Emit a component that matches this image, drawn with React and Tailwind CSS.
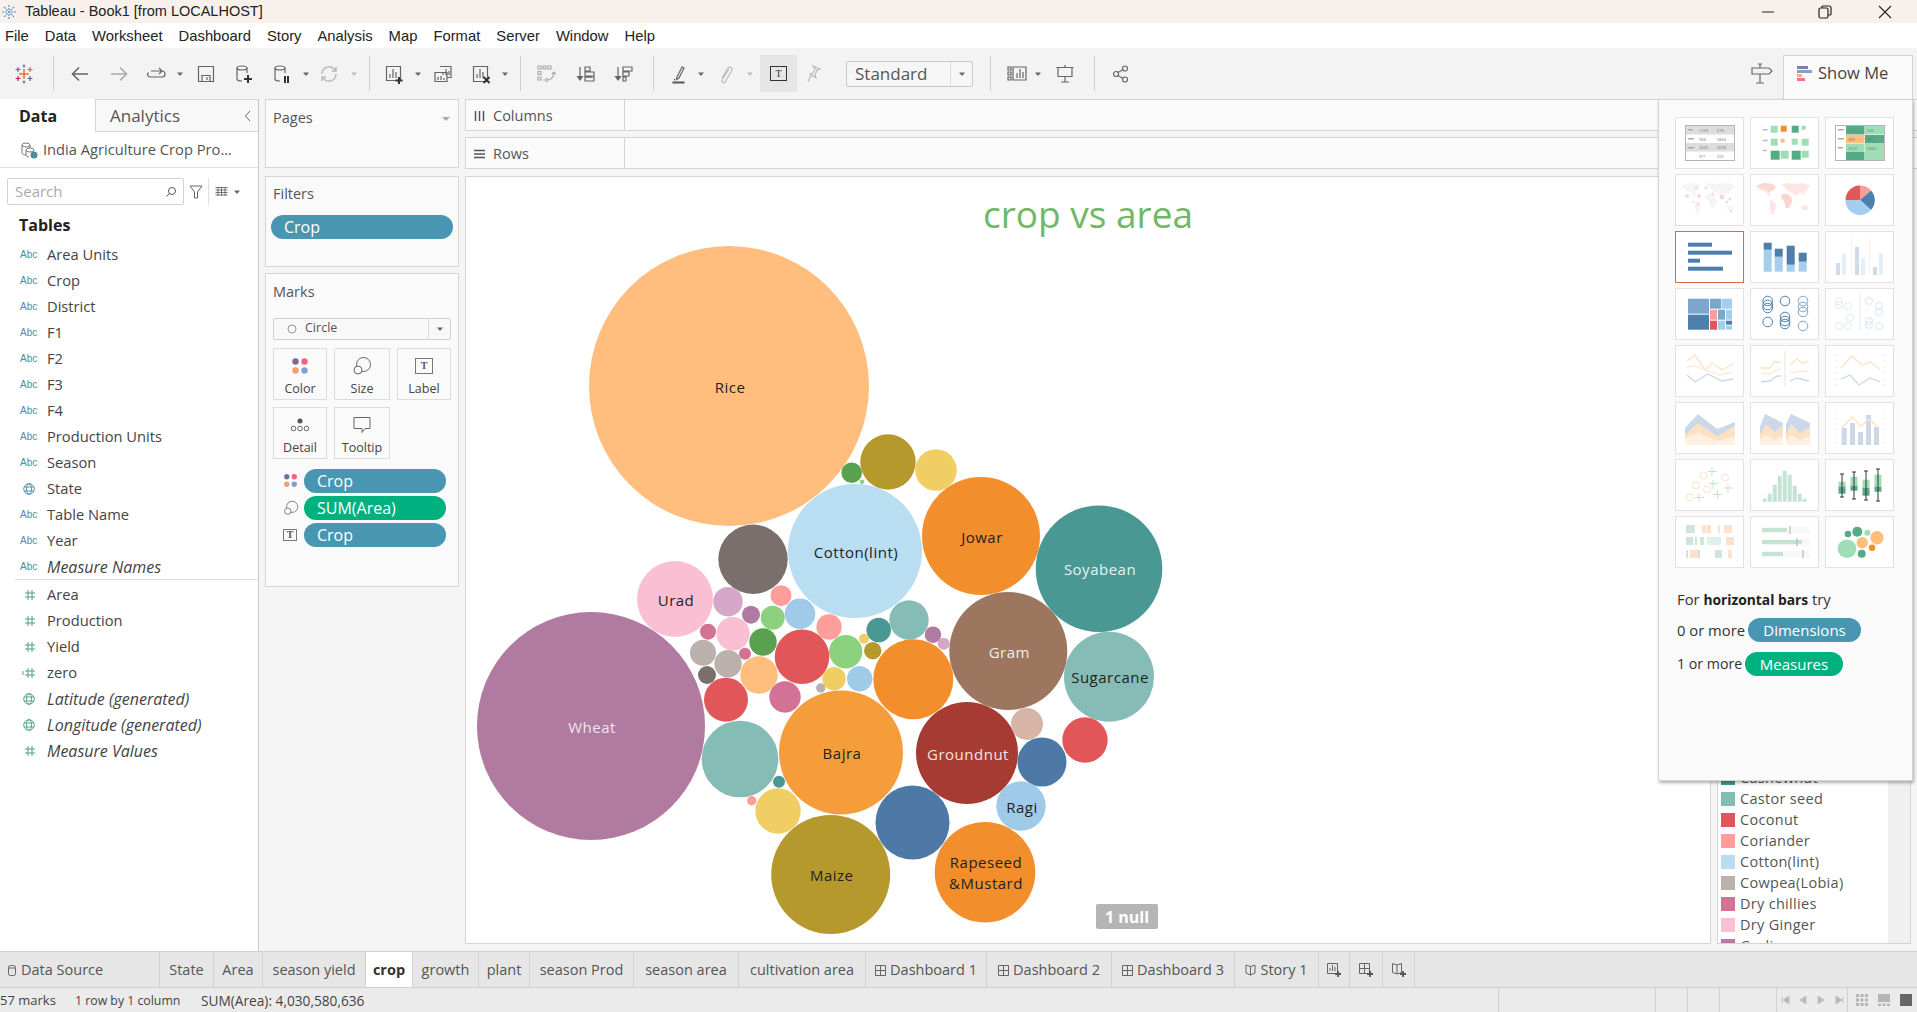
import React from "react";

const FONT = "font-['Open_Sans','Noto_Sans',sans-serif]";

const I = ({ w = 20, h = 20, vb, className = "", children, sw = 1.2, stroke = "#666" }) => (
  <svg width={w} height={h} viewBox={vb || `0 0 ${w} ${h}`} fill="none" stroke={stroke} strokeWidth={sw} className={"shrink-0 " + className}>{children}</svg>
);
const Dd = ({ className = "", light }) => (
  <svg width="8" height="20" viewBox="0 0 8 20" className={"shrink-0 " + className}><path d="M1 8.5h6L4 12z" fill={light ? "#bbb" : "#666"} /></svg>
);
const Div = ({ className = "" }) => <div className={"w-px h-[35px] bg-[#cfcfcf] shrink-0 " + className} />;

const Logo = () => (
  <svg width="20" height="20" viewBox="0 0 20 20" className="shrink-0" strokeWidth="1.2" fill="none">
    <path d="M10 5v10M5 10h10" stroke="#e8762b" strokeWidth="1.6" />
    <path d="M4 3v5M1.500 5.500h5" stroke="#7b5ea7" />
    <path d="M16 3v5M13.500 5.500h5" stroke="#e15759" />
    <path d="M4 12v5M1.500 14.500h5" stroke="#c72035" />
    <path d="M16 12v5M13.500 14.500h5" stroke="#5b6591" />
    <path d="M10 .5v3M8.500 2h3M10 16.500v3M8.500 18h3" stroke="#4e79a7" />
  </svg>
);
const Db = ({ children, color = "#666" }) => (
  <I stroke={color}><ellipse cx="8" cy="4" rx="5" ry="2" /><path d="M3 4v11c0 1 2 2 5 2M13 4v5" />{children}</I>
);
const Toolbar = () => (
  <div className="h-[51px] bg-[#f3f3f3] flex items-center pl-[14px] shrink-0 relative">
    <Logo />
    <Div className="ml-[19px]" />
    <I className="ml-[16px]" sw={1.6}><path d="M18 10H3M9 3.500L2.500 10 9 16.500" /></I>
    <I className="ml-[19px]" sw={1.6} stroke="#aaa"><path d="M2 10h15M11 3.500l6.500 6.500-6.500 6.500" /></I>
    <I className="ml-[17px]"><path d="M5 7h11a2.500 2.500 0 0 1 0 6H4a2.500 2.500 0 0 1-1.500-4.500M13 4l3 3-3 3" /></I>
    <Dd className="ml-[10px]" />
    <I className="ml-[12px]"><path d="M2.500 2.500h15v15h-15zM6 17.500v-6h8v6M11 13v3" /></I>
    <div className="ml-[18px]"><Db><path d="M14 11v8M10 15h8" stroke="#333" strokeWidth="2" /></Db></div>
    <div className="ml-[18px]"><Db><path d="M13 12v7M16 12v7" stroke="#333" strokeWidth="2" /></Db></div>
    <Dd className="ml-[10px]" />
    <I className="ml-[9px]" stroke="#bbb" sw={1.5}><path d="M3 10a7 7 0 0 1 12-5l2 2M17 10a7 7 0 0 1-12 5l-2-2M17 3v4h-4M3 17v-4h4" /></I>
    <Dd className="ml-[11px]" light />
    <Div className="ml-[11px]" />
    <I className="ml-[14px]"><path d="M2.500 2.500h14v14h-14zM6 14v-4M9 14V5M12 14V8" /><path d="M15 13v7M11.500 16.500h7" stroke="#333" strokeWidth="2" /></I>
    <Dd className="ml-[10px]" />
    <I className="ml-[11px]"><path d="M7 2.500h11v11h-4M10 11V8M13 11V5M16 11V7M2 8.500h12v9H2zM5 16v-3M8 16v-4M11 16v-2" /></I>
    <I className="ml-[18px]"><path d="M2.500 2.500h14v15h-14zM6 14v-4M9 14V5M12 14V8" /><path d="M12.500 13l6 6M18.500 13l-6 6" stroke="#333" strokeWidth="2" /></I>
    <Dd className="ml-[10px]" />
    <Div className="ml-[11px]" />
    <I className="ml-[15px]" stroke="#aaa"><path d="M2 2h3v3H2zM7 2h3v3H7zM12 2h3v3h-3zM2 7.500h3v3H2zM2 13h3v3H2zM7 16h3M18 8c0 5-2 7-6 8M10 14l2 2-2 2M16 10l2-2 2 2" /></I>
    <I className="ml-[20px]"><path d="M4 3v13M1.500 12.500L4 16l2.500-3.500z" fill="#555" /><path d="M9 3h5v4H9zM9 8h9v4H9zM9 13h7" /><path d="M9 13h9v4H9z" /></I>
    <I className="ml-[18px]"><path d="M4 3v13M1.500 12.500L4 16l2.500-3.500z" fill="#555" /><path d="M9 3h9v4H9zM9 8h6v4H9zM9 13h3v4H9z" /></I>
    <Div className="ml-[19px]" />
    <I className="ml-[16px]"><path d="M7 13L12 3l2 1-5 10-2.500 1.500zM5 15l-1 1" /><path d="M2.500 18.500h12" stroke="#555" strokeWidth="2" /></I>
    <Dd className="ml-[7px]" />
    <I className="ml-[11px]" stroke="#bbb"><path d="M6 14l6-10c1-2 5 0 4 2l-7 12c-1 2-4 0-3-2l7-11" /></I>
    <Dd className="ml-[10px]" light />
    <div className="ml-[6px] w-[37px] h-[37px] bg-[#e6e6e6] flex items-center justify-center shrink-0">
      <div className={"w-[17px] h-[15px] border border-[#333] flex items-center justify-center text-[10px] leading-none text-[#333] font-['Liberation_Serif',serif]"}>T</div>
    </div>
    <I className="ml-[7px]" stroke="#bbb"><path d="M9 2l7 3-3 1-2 5 1 3-6-4 3-1 2-4zM7 11l-3 7" /></I>
    <div className={`ml-[22px] w-[127px] h-[26px] rounded-[2px] border border-[#c8c8c8] bg-[#f6f6f6] flex items-center shrink-0 ${FONT}`}>
      <span className="flex-1 pl-[8px] text-[17px] text-[#555] leading-none">Standard</span>
      <div className="w-[22px] h-full border-l border-[#dcdcdc] flex items-center justify-center"><Dd /></div>
    </div>
    <Div className="ml-[17px]" />
    <I className="ml-[16px]"><path d="M1 3h3v3H1zM1 8h3v3H1zM1 13h3v3H1zM6 3h13v13H6zM10 14V9M13 14V5M16 14V8" /></I>
    <Dd className="ml-[7px]" />
    <I className="ml-[13px]"><path d="M1.500 3.500h17M3 3.500v9h14v-9M10 12.500v5M6 18h8M10 1v2.500" /></I>
    <Div className="ml-[19px]" />
    <I className="ml-[16px]"><circle cx="5" cy="10" r="2.500" /><circle cx="14" cy="4.500" r="2.500" /><circle cx="14" cy="15.500" r="2.500" /><path d="M7 8.500l5-3M7 11.500l5 3" /></I>
    <div className="ml-auto flex items-end h-full">
      <I w={24} h={24} className="mb-[14px] mr-[9px]"><path d="M2 7h17l3 3-3 3H2zM10 7V3M10 13v9M6 22h8M8 3h4" /></I>
      <div className={`w-[130px] h-[44px] bg-[#fafafa] border-t border-x border-[#d4d4d4] flex items-center pl-[13px] pb-[8px] mr-[4px] gap-[6px] text-[#444] text-[16.500px] ${FONT}`}>
        <svg width="15" height="16" viewBox="0 0 15 16" className="shrink-0"><path fill="#8d7aa3" d="M0 0h11v3H0z" /><path fill="#7ba3cc" d="M0 4h15v3H0z" /><path fill="#f7b27a" d="M0 8h5v3H0z" /><path fill="#f2737f" d="M0 12h8v3H0z" /></svg>
        Show Me
      </div>
    </div>
  </div>
);

const Abc = ({ color = "#4e8ba5" }) => <span className="w-[32px] text-center pl-[5px] pr-[11px] text-[10px] leading-none font-['Liberation_Sans',sans-serif] shrink-0" style={{ color }}>Abc</span>;
const Hash = ({ eq }) => (
  <span className="w-[32px] flex justify-center shrink-0 pl-[4px] pr-[8px]">
    <svg width="14" height="12" viewBox="0 0 14 12" stroke="#4aa37c" strokeWidth="1" fill="none"><path d="M6 1v10M10 1v10M3 4h10M3 8h10" />{eq && <path d="M0 5h2M0 7h2" />}</svg>
  </span>
);
const Globe = ({ color = "#4e8ba5" }) => (
  <span className="w-[32px] flex justify-center shrink-0 pl-[4px] pr-[8px]">
    <svg width="12" height="12" viewBox="0 0 12 12" stroke={color} strokeWidth=".9" fill="none"><circle cx="6" cy="6" r="5.300" /><ellipse cx="6" cy="6" rx="2.500" ry="5.300" /><path d="M1 4h10M1 8h10" /></svg>
  </span>
);
const dims = [
  ["Area Units"], ["Crop"], ["District"], ["F1"], ["F2"], ["F3"], ["F4"], ["Production Units"], ["Season"],
  ["State", "globe"], ["Table Name"], ["Year"], ["Measure Names", "abc", true],
];
const meas = [
  ["Area", "hash"], ["Production", "hash"], ["Yield", "hash"], ["zero", "eq"],
  ["Latitude (generated)", "globeg", true], ["Longitude (generated)", "globeg", true], ["Measure Values", "hash", true],
];
const Field = ({ name, kind = "abc", it }) => (
  <div className="h-[26px] flex items-center pl-[15px] pb-[1px]">
    {kind === "abc" && <Abc />}
    {kind === "globe" && <Globe />}
    {kind === "globeg" && <Globe color="#4aa37c" />}
    {kind === "hash" && <Hash />}
    {kind === "eq" && <Hash eq />}
    <span className={"text-[#444] whitespace-nowrap " + (it ? "italic text-[16px]" : "text-[14.700px]")}>{name}</span>
  </div>
);

const LeftPane = () => (
  <div className={`w-[259px] shrink-0 bg-white border-r border-[#c8c8c8] flex flex-col ${FONT}`}>
    <div className="h-[33px] flex shrink-0">
      <div className="w-[95px] flex items-center pl-[19px] text-[16px] font-bold text-[#222]">Data</div>
      <div className="flex-1 bg-[#f8f8f8] border-l border-b border-t border-[#d6d6d6] flex items-center pl-[14px] text-[17px] text-[#555] relative">
        Analytics
        <svg width="8" height="12" viewBox="0 0 8 12" className="ml-auto mr-[6px]" fill="none" stroke="#666"><path d="M6 1L1.500 6 6 11" /></svg>
      </div>
    </div>
    <div className="h-[36px] border-b border-[#dedede] flex items-center pl-[20px] shrink-0">
      <svg width="18" height="18" viewBox="0 0 18 18" fill="none" stroke="#777" className="shrink-0"><ellipse cx="6" cy="4" rx="4" ry="2" /><path d="M2 4v8c0 1 2 2 4 2M10 4v3" /><ellipse cx="10" cy="9" rx="4" ry="2" /><path d="M6 9v5c0 1 2 2 3 2" /><circle cx="14" cy="14" r="3.500" fill="#4e8ba5" stroke="none" /></svg>
      <span className="ml-[5px] text-[14.700px] text-[#555] whitespace-nowrap">India Agriculture Crop Pro...</span>
    </div>
    <div className="h-[27px] mt-[10px] flex items-center pl-[7px] shrink-0">
      <div className="w-[177px] h-full border border-[#d2d2d2] rounded-[2px] flex items-center pl-[7px] pr-[6px] text-[15px] text-[#aaa]">
        <span className="flex-1">Search</span>
        <svg width="12" height="12" viewBox="0 0 12 12" fill="none" stroke="#555"><circle cx="7" cy="5" r="3.500" /><path d="M4.500 7.500L1.500 10.500" /></svg>
      </div>
      <svg width="14" height="14" viewBox="0 0 14 14" fill="none" stroke="#666" className="ml-[5px]"><path d="M1 1h12L8.500 7v6h-3V7z" /></svg>
      <div className="w-px h-[27px] bg-[#e0e0e0] ml-[5px]" />
      <svg width="13" height="12" viewBox="0 0 13 12" fill="none" stroke="#666" strokeWidth=".9" className="ml-[6px]"><path d="M.500 1.500h12M.500 4h12M.500 6.500h12M.500 9h12M3 1v9M6.500 1v9M10 1v9" /></svg>
      <Dd className="ml-[5px]" />
    </div>
    <div className="h-[26px] mt-[7px] flex items-center pl-[19px] text-[16px] font-bold text-[#222] shrink-0">Tables</div>
    <div className="mt-[4px] pb-0">
      {dims.map(([n, k, it]) => <Field key={n} name={n} kind={k} it={it} />)}
    </div>
    <div className="ml-[15px] h-px bg-[#dedede] -mt-[1px]" />
    <div className="mt-[2px]">
      {meas.map(([n, k, it]) => <Field key={n} name={n} kind={k} it={it} />)}
    </div>
  </div>
);

const Pill = ({ children, green, className = "" }) => (
  <div className={`rounded-full h-[24px] flex items-center pl-[13px] text-[16px] text-white leading-none ${green ? "bg-[#00b180]" : "bg-[#4996b2]"} ${className}`}>{children}</div>
);
const Dots = ({ s = 18 }) => (
  <svg width={s} height={s} viewBox="0 0 18 18"><circle cx="4.500" cy="4.500" r="3.200" fill="#7b6a96" /><circle cx="13.500" cy="4.500" r="3.200" fill="#f2637a" /><circle cx="4.500" cy="13.500" r="3.200" fill="#f2a06e" /><circle cx="13.500" cy="13.500" r="3.200" fill="#7ba3d0" /></svg>
);
const SizeI = ({ s = 20 }) => (
  <svg width={s} height={s} viewBox="0 0 20 20" fill="none" stroke="#666"><circle cx="11.500" cy="8.500" r="7" fill="#fafafa" /><circle cx="6" cy="14" r="4" fill="#fafafa" /></svg>
);
const TI = ({ w = 18, h = 16 }) => (
  <div className="border border-[#777] flex items-center justify-center text-[10px] leading-none text-[#555] font-['Liberation_Serif',serif] font-bold" style={{ width: w, height: h }}>T</div>
);
const MarkBtn = ({ label, w, children }) => (
  <div className={`${w} h-[52px] border border-[#dcdcdc] flex flex-col items-center pt-[6px] shrink-0`}>
    <div className="h-[22px] flex items-center justify-center">{children}</div>
    <div className="text-[12.500px] text-[#444] leading-none mt-[6px]">{label}</div>
  </div>
);
const Card = ({ title, className = "", pt = "pt-[11px]", children }) => (
  <div className={`bg-[#fafafa] border border-[#d4d4d4] shrink-0 ${className}`}>
    <div className={`pl-[7px] ${pt} text-[14.500px] text-[#555] leading-none`}>{title}</div>
    {children}
  </div>
);
const MiddlePane = () => (
  <div className={`w-[194px] ml-[6px] shrink-0 flex flex-col ${FONT}`}>
    <Card title="Pages" className="h-[69px] relative">
      <svg width="8" height="5" viewBox="0 0 8 5" className="absolute right-[8px] top-[17px]"><path d="M0 0h8L4 4z" fill="#aaa" /></svg>
    </Card>
    <Card title="Filters" pt="pt-[10px]" className="h-[91px] mt-[8px]">
      <div className="px-[5px] mt-[13px]"><Pill>Crop</Pill></div>
    </Card>
    <Card title="Marks" className="h-[314px] mt-[6px]">
      <div className="mx-[7px] mt-[18px] h-[22px] border border-[#cfcfcf] rounded-[2px] flex items-center text-[12.500px] text-[#555] bg-[#f8f8f8]">
        <svg width="10" height="10" viewBox="0 0 10 10" fill="none" stroke="#999" className="ml-[13px]"><circle cx="5" cy="5" r="4" /></svg>
        <span className="ml-[8px] flex-1">Circle</span>
        <div className="w-[22px] h-full border-l border-[#dcdcdc] flex items-center justify-center"><Dd /></div>
      </div>
      <div className="flex gap-[7px] ml-[7px] mt-[8px]">
        <MarkBtn label="Color" w="w-[54px]"><Dots /></MarkBtn>
        <MarkBtn label="Size" w="w-[56px]"><SizeI /></MarkBtn>
        <MarkBtn label="Label" w="w-[54px]"><TI /></MarkBtn>
      </div>
      <div className="flex gap-[7px] ml-[7px] mt-[7px]">
        <MarkBtn label="Detail" w="w-[54px]">
          <svg width="20" height="16" viewBox="0 0 20 16" fill="none" stroke="#666"><circle cx="10" cy="4" r="2.500" fill="#555" stroke="none" /><circle cx="3.500" cy="11.500" r="2.300" /><circle cx="10" cy="11.500" r="2.300" /><circle cx="16.500" cy="11.500" r="2.300" /></svg>
        </MarkBtn>
        <MarkBtn label="Tooltip" w="w-[56px]">
          <svg width="20" height="18" viewBox="0 0 20 18" fill="none" stroke="#666"><path d="M2 1.500h16v11h-5L10 16.500V12.500H2z" /></svg>
        </MarkBtn>
      </div>
      <div className="mt-[10px] flex flex-col gap-[3px] pl-[17px]">
        <div className="flex items-center"><span className="w-[21px]"><Dots s={15} /></span><Pill className="w-[142px]">Crop</Pill></div>
        <div className="flex items-center"><span className="w-[21px]"><SizeI s={16} /></span><Pill green className="w-[142px]">SUM(Area)</Pill></div>
        <div className="flex items-center"><span className="w-[21px]"><TI w={14} h={12} /></span><Pill className="w-[142px]">Crop</Pill></div>
      </div>
    </Card>
  </div>
);

const bubbles = [
  [729, 386, 140, "#ffbe7d", "Rice", "#222"],
  [591, 726, 114, "#b07aa1", "Wheat", "#f1e6ee"],
  [855, 551, 67, "#b9ddf1", "Cotton(lint)", "#222"],
  [753, 559.300, 34.700, "#79706e"],
  [675, 599, 38, "#fabfd2", "Urad", "#222"],
  [728, 601.700, 14.700, "#d4a6c8"],
  [751, 614.700, 9, "#b07aa1"],
  [781, 595.700, 10.500, "#ff9d9a"],
  [772.700, 617.700, 12, "#8cd17d"],
  [800, 613.700, 15.300, "#a0cbe8"],
  [829, 627, 12.700, "#ff9d9a"],
  [878.700, 630, 12.300, "#499894"],
  [909, 620, 19.700, "#86bcb6"],
  [933, 634.700, 8.300, "#b07aa1"],
  [943.700, 643.700, 6, "#d4a6c8"],
  [708, 631.700, 8, "#d37295"],
  [733, 633.700, 16.700, "#fabfd2"],
  [703, 652.700, 13, "#bab0ac"],
  [763, 642, 13.700, "#59a14f"],
  [745, 653.700, 6, "#d37295"],
  [728, 663.700, 13.700, "#bab0ac"],
  [707, 675, 9, "#79706e"],
  [802, 656.700, 27.300, "#e15759"],
  [845.700, 651.700, 16.700, "#8cd17d"],
  [864, 638.700, 5, "#f1ce63"],
  [872.700, 650.700, 8.700, "#b6992d"],
  [759, 675, 18.700, "#ffbe7d"],
  [834, 678.700, 11.700, "#f1ce63"],
  [859.700, 678.700, 12.700, "#a0cbe8"],
  [820.700, 688, 4.700, "#bab0ac"],
  [785, 697, 15.700, "#d37295"],
  [726, 699.700, 22, "#e15759"],
  [740, 759, 38.300, "#86bcb6"],
  [913.300, 679.300, 40, "#f28e2b"],
  [841, 752.500, 62, "#f59d3b", "Bajra", "#222"],
  [967, 753, 51, "#a53b33", "Groundnut", "#f3e3e0"],
  [1008.300, 651, 59, "#9d7660", "Gram", "#f3ebe6"],
  [981, 536, 59, "#f28e2b", "Jowar", "#222"],
  [1099, 568.700, 63.300, "#499894", "Soyabean", "#e6f2f1"],
  [1109, 676.700, 45, "#86bcb6", "Sugarcane", "#222"],
  [888, 462, 27.700, "#b6992d"],
  [851.700, 472.700, 10.300, "#59a14f"],
  [862, 481.700, 2.300, "#8cd17d"],
  [936, 470, 20.800, "#f1ce63"],
  [1085, 740, 22.700, "#e15759"],
  [1027, 724, 16, "#d7b5a6"],
  [1042, 762, 24.500, "#4e79a7"],
  [1021, 806, 24.700, "#a0cbe8", "Ragi", "#222"],
  [912.500, 822.500, 37, "#4e79a7"],
  [830.700, 874.500, 59.500, "#b6992d", "Maize", "#222"],
  [985, 872.300, 50.300, "#f28e2b"],
  [778, 811, 22.700, "#f1ce63"],
  [779, 781.700, 6, "#499894"],
  [751.700, 800.700, 4.700, "#ff9d9a"],
];
const View = () => (
  <div className={`flex-1 bg-white border border-[#d4d4d4] relative overflow-hidden ${FONT}`}>
    <div className="text-center pt-[15px] text-[37px] leading-[44px] text-[#6fb966]">crop vs area</div>
    <svg width="1246" height="768" viewBox="465 176 1246 768" className="absolute left-[-1px] top-[-1px]">
      {bubbles.map(([x, y, r, f], i) => <circle key={i} cx={x} cy={y} r={r} fill={f} />)}
      {bubbles.filter(b => b[4]).map(([x, y, r, f, t, c]) => (
        <text key={t} x={x + 1} y={y + 6.500} fill={c} fontSize="15" textAnchor="middle" letterSpacing=".5">{t}</text>
      ))}
      <text x="986" y="868" fill="#222" fontSize="15" textAnchor="middle" letterSpacing=".5">Rapeseed</text>
      <text x="986" y="889" fill="#222" fontSize="15" textAnchor="middle" letterSpacing=".5">&amp;Mustard</text>
    </svg>
    <div className="absolute left-[630px] top-[727px] w-[62px] h-[25px] rounded-[2px] bg-[#b5b5b5] text-white font-bold text-[16px] flex items-center justify-center">1 null</div>
  </div>
);

const legend = [
  ["Cashewnut", "#499894"], ["Castor seed", "#86bcb6"], ["Coconut", "#e15759"], ["Coriander", "#ff9d9a"],
  ["Cotton(lint)", "#b9ddf1"], ["Cowpea(Lobia)", "#bab0ac"], ["Dry chillies", "#d37295"], ["Dry Ginger", "#fabfd2"], ["Garlic", "#b07aa1"],
];
const Legend = () => (
  <div className={`w-[194px] ml-[6px] mr-[6px] shrink-0 bg-[#f0f0f0] border border-[#d4d4d4] flex overflow-hidden ${FONT}`}>
    <div className="w-[170px] bg-white flex flex-col justify-end pl-[3px] overflow-hidden">
      <div className="-mb-[13px]">
        {legend.map(([n, c]) => (
          <div key={n} className="h-[21px] flex items-center text-[14.500px] tracking-[0.3px] text-[#555] whitespace-nowrap">
            <span className="w-[14px] h-[14px] mr-[5px] shrink-0 block" style={{ background: c }} />{n}
          </div>
        ))}
      </div>
    </div>
  </div>
);

/* Show Me thumbnails */
const P = "#c9d9e8", O = "#fde1c4", OL = "#fef1e2", G = "#c5e3d3", DB = "#4e7fac", LB = "#a5cdee", LG = "#9fddb5", DG = "#55ab85";
const rs = (arr, fill) => arr.map(([x, y, w, h], i) => <rect key={fill + i} x={x} y={y} width={w} height={h} fill={fill} />);
const pl = (pts, stroke, sw = 1.300) => <polyline points={pts} fill="none" stroke={stroke} strokeWidth={sw} />;
const tt = (x, y, s) => <text x={x} y={y} fontSize="4" fill="#777" stroke="none">{s}</text>;
const land = "M6 12l8-3 9 1 3 3-4 4-3 1 2 3-2 2-3-5-6-2zM20 26l5 2 1 5-3 8-2-1-1-7zM31 10l8-1 3 1 12-1 6 3-3 4-3 1 1 4-3-2-5 1-1 3-3-4-4-1zM32 20l6 0 3 3 1 4-3 7-3 0-2-7-3-3zM51 32l5-1 3 3-3 2-4 0z";
const thumbs = [
  <g key="0">
    <rect x="10.500" y="8.500" width="49" height="35" fill="#fff" stroke="#b5b5b5" />
    {rs([[11, 9, 48, 8.500], [11, 26, 48, 8.500]], "#ddd")}
    {rs([[13, 12, 5, 1.500], [13, 21, 6, 1.500], [13, 30, 6, 1.500]], "#aaa")}
    {tt(24, 14.500, "1234")}{tt(42, 14.500, "678")}{tt(24, 23.500, "368")}{tt(42, 23.500, "3834")}{tt(24, 32, "2620")}{tt(42, 32, "2658")}{tt(24, 41, "971")}{tt(42, 41, "322")}
  </g>,
  <g key="1">
    {rs([[12.700, 12, 5, 1.500], [12.700, 22.700, 5, 1.500], [12.700, 32.700, 4, 1.500]], "#bbb")}
    {rs([[20.700, 8.700, 7, 7], [51.700, 8.700, 4, 4], [20.700, 21.700, 7, 7], [41.700, 21.700, 6, 6], [51.700, 21.700, 7, 7], [30.700, 33.700, 8, 8], [51.700, 33.700, 7, 7]], LG)}
    {rs([[41.700, 8.700, 7, 7], [20.700, 33.700, 9, 9], [41.700, 33.700, 9, 9]], DG)}
    {rs([[30.700, 8.700, 6, 6]], "#f28e2b")}{rs([[30.700, 21.700, 4, 4]], "#ffbe7d")}
  </g>,
  <g key="2">
    <rect x="10.500" y="8.500" width="49" height="35" fill="#fff" stroke="#b5b5b5" />
    {rs([[21, 9, 18.500, 8.500], [40, 18, 19, 8.500], [21, 35, 18.500, 8]], DG)}
    {rs([[40, 9, 19, 8.500], [21, 27, 18.500, 8], [40, 27, 19, 8], [40, 35, 19, 8]], LG)}
    {rs([[21, 18, 18.500, 8.500]], "#ffbe7d")}
    {rs([[13, 12, 6, 1.500], [13, 21, 6, 1.500], [13, 30, 5, 1.500]], "#aaa")}
    {tt(23, 15, "1234")}{tt(42, 15, "546")}{tt(23, 24, "368")}{tt(42, 24, "380")}{tt(23, 33, "2620")}{tt(42, 33, "5860")}
  </g>,
  <g key="3">
    <path d={land} fill="#f5f5f5" />
    {[[12, 22, 2], [21, 14, 1.500], [24, 22, 2], [31, 14, 1.500], [38, 20, 1.500], [47, 23, 2.500], [52, 28, 1.500], [55, 25, 1.500], [23, 30, 1.500], [56, 37, 1.500], [18, 28, 1]].map(([x, y, r], i) => <circle key={i} cx={x} cy={y} r={r} fill="#f9d8d5" />)}
  </g>,
  <g key="4"><path d={land} fill="#fde6e3" /><path d="M6 12l8-3 9 1 3 3-4 4-3 1-3-2-6-2zM32 20l6 0 3 3 1 4-3 7-3 0-2-7-3-3z" fill="#f9d7d2" /></g>,
  <g key="5">
    <path d="M35 26L35 11.500A14.500 14.500 0 0 1 46 16.500z" fill="#ff9d9a" />
    <path d="M35 26L46 16.500A14.500 14.500 0 0 1 46 36z" fill="#4e7fac" />
    <path d="M35 26L46 36A14.500 14.500 0 0 1 20.500 26z" fill="#a5cdee" />
    <path d="M35 26L20.500 26A14.500 14.500 0 0 1 35 11.500z" fill="#e15759" />
  </g>,
  <g key="6">{rs([[13, 11.700, 24, 4], [13, 19.700, 44, 4], [13, 27.700, 12, 4], [13, 35.700, 35, 4]], DB)}</g>,
  <g key="7">
    {rs([[13.700, 18.700, 8, 22], [24.700, 25.700, 8, 15], [36.700, 33.700, 8, 7], [48.700, 30.700, 8, 10]], LB)}
    {rs([[13.700, 11.700, 8, 7], [24.700, 17.700, 8, 8], [36.700, 14.700, 8, 19], [48.700, 21.700, 8, 9]], DB)}
  </g>,
  <g key="8">
    {rs([[26, 6, .5, 36], [44.500, 6, .5, 36]], "#e5e5e5")}
    {rs([[11, 32, 4, 12], [30, 16, 4, 28], [48, 36, 4, 8]], "#cfdbe8")}
    {rs([[17, 23, 4, 21], [36, 27, 4, 17], [54, 22, 4, 22]], "#e3eff9")}
  </g>,
  <g key="9">
    {rs([[13, 10.700, 21, 15], [35, 10.700, 11, 10], [43, 21.700, 7, 10]], "#7ba7cc")}
    {rs([[13, 26.700, 21, 15], [51, 32.700, 6, 4]], DB)}
    {rs([[46.500, 10.700, 10.500, 10], [51, 21.700, 6, 10], [43, 32.700, 7, 9], [51, 37.700, 6, 4]], LB)}
    {rs([[35, 21.700, 7, 10]], "#ff9d9a")}{rs([[35, 32.700, 7, 9]], "#e15759")}
  </g>,
  <g key="10" fill="none" strokeWidth="1">
    {[[17.700, 13], [17.700, 17], [17.700, 20], [17.700, 34], [35, 13], [35, 29], [35, 33], [35, 36]].map(([x, y], i) => <circle key={i} cx={x} cy={y} r="4.800" stroke={DB} />)}
    {[[53, 13], [53, 19], [53, 24], [53, 38]].map(([x, y], i) => <circle key={i} cx={x} cy={y} r="4.800" stroke="#7ba7cc" />)}
  </g>,
  <g key="11" fill="none" strokeWidth=".9">
    {[[14, 13], [14, 17], [23, 18], [14, 38], [25, 30], [23, 38]].map(([x, y], i) => <circle key={i} cx={x} cy={y} r="3.500" stroke="#dde8f0" />)}
    {[[44, 13], [54, 18], [54, 24], [44, 37], [44, 33], [54, 38]].map(([x, y], i) => <circle key={i} cx={x} cy={y} r="3.500" stroke="#cfe4f5" />)}
    <path d="M35 6v36" stroke="#e5e5e5" />
  </g>,
  <g key="12">
    {pl("12,16 20,10 30,25 37,18 47,25 59,18", O)}{pl("12,22 20,21 30,25 45,30 58,27", "#fdebd8")}{pl("12,30 20,37 33,29 47,36 58,34", P)}
  </g>,
  <g key="13">
    {pl("11,23 20,23 24,17 31,17", O)}{pl("40,20 47,14 52,18 59,16", O)}{pl("11,28 20,29 29,24 31,24", "#fdebd8")}{pl("40,28 50,26 59,27", "#fdebd8")}{pl("11,37 20,36 27,31 31,31", P)}{pl("40,36 47,33 59,36", P)}
    <path d="M35 6v36" stroke="#e5e5e5" fill="none" />
  </g>,
  <g key="14">
    {pl("16,23 27,11 37,20 45,17 55,24", O)}{pl("16,34 25,30 34,40 45,33 55,37", P)}
    <path d="M10 10h3M10 16h3M10 22h3M10 28h3M10 34h3M10 40h3M58 10h3M58 16h3M58 22h3M58 28h3M58 34h3M58 40h3" stroke="#eee" fill="none" />
  </g>,
  <g key="15">
    <polygon points="10,26 23,12 42,27 60,20 60,43 10,43" fill={P} />
    <polygon points="10,33 23,21 42,34 60,24 60,43 10,43" fill={O} />
    <polygon points="10,36 23,31 42,39 60,34 60,43 10,43" fill={OL} />
  </g>,
  <g key="16">
    <polygon points="10,25 15,12 33,21 33,43 10,43" fill={P} /><polygon points="36,22 41,12 60,21 60,43 36,43" fill={P} />
    <polygon points="10,33 16,22 25,30 33,23 33,43 10,43" fill={O} /><polygon points="36,33 41,22 50,31 60,25 60,43 36,43" fill={O} />
    <polygon points="10,38 16,33 25,38 33,34 33,43 10,43" fill={OL} /><polygon points="36,38 41,33 50,38 60,34 60,43 36,43" fill={OL} />
  </g>,
  <g key="17">
    {rs([[16.700, 26, 5, 17], [25, 21, 5, 22], [33, 30, 5, 13], [41, 13, 5, 30], [49, 25, 5, 18]], P)}
    {pl("17,26 27,15 36,24 44,17 54,26", O)}
    <path d="M10 10h3M10 16h3M10 22h3M10 28h3M10 34h3M10 40h3M58 10h3M58 16h3M58 22h3M58 28h3M58 34h3M58 40h3" stroke="#eee" fill="none" />
  </g>,
  <g key="18" fill="none">
    {[[28.500, 16.500], [21, 26.500], [32, 30.500], [50, 18.500], [15, 38.500]].map(([x, y], i) => <circle key={i} cx={x} cy={y} r="3.500" stroke={O} />)}
    <path d="M37 8v9M33 12.500h9M38 21v9M34 24.500h9M53 25v9M49 29h9M42.500 31v9M38 35.500h9M24 34v9M20 38.500h9" stroke={G} />
  </g>,
  <g key="19">{rs([[12.700, 39.700, 4, 3], [17.700, 34.700, 4, 8], [22.700, 25.700, 4, 17], [27.700, 16.700, 4, 26], [32.700, 11.700, 4, 31], [37.700, 15.700, 4, 27], [42.700, 26.700, 4, 16], [47.700, 34.700, 4, 8], [52.700, 39.700, 4, 3]], G)}</g>,
  <g key="20">
    {rs([[13.500, 22.700, 7, 5], [25.500, 17.700, 7, 9], [37.500, 20.700, 7, 8], [49.500, 15.700, 7, 12]], LG)}
    {rs([[13.500, 27.700, 7, 7], [25.500, 26.700, 7, 5], [37.500, 28.700, 7, 8], [49.500, 27.700, 7, 5]], DG)}
    <path d="M17 15v23M15 15h4M15 38h4M29 13v27M27 13h4M27 40h4M41 12v29M39 12h4M39 41h4M53 10v32M51 10h4M51 42h4" stroke="#333" fill="none" />
  </g>,
  <g key="21">
    {rs([[11, 9, 9, 8], [11, 21, 7, 8], [20, 21, 2, 8], [25, 21, 4, 8], [11, 34, 2, 8], [21, 34, 4, 8], [40, 34, 7, 8]], "#cfe5da")}
    {rs([[32, 21, 14, 8]], "#e1f0e8")}
    {rs([[27, 9, 4, 8], [32, 9, 4, 8], [43, 9, 2, 8], [49, 9, 8, 8], [51, 21, 8, 8], [15, 34, 8, 8], [53, 34, 4, 8]], "#fde1cc")}
  </g>,
  <g key="22">
    {rs([[12, 11, 48, 7], [12, 23, 48, 7], [12, 35, 48, 7]], "#f8f8f8")}
    {rs([[12, 12, 25, 4], [12, 24, 40, 4], [12, 36, 21, 4]], G)}
    <path d="M40 10v8M47 22v8M53 34v8" stroke="#aaa" fill="none" />
  </g>,
  <g key="23">
    <circle cx="22" cy="32.700" r="9.300" fill={LG} /><circle cx="32.300" cy="15.700" r="5" fill={DG} /><circle cx="23" cy="18" r="3.300" fill={DG} />
    <circle cx="42.300" cy="16.700" r="3" fill={LG} /><circle cx="52" cy="21.700" r="6.700" fill="#ffbe7d" /><circle cx="37.300" cy="26.700" r="5.700" fill="#ffbe7d" />
    <circle cx="47" cy="31.700" r="3.300" fill="#f28e2b" /><circle cx="36.700" cy="37.700" r="4" fill={DG} />
  </g>,
];
const Thumb = ({ selected, children }) => (
  <div className={`w-[69px] h-[52px] bg-white ${selected ? "border-[1.500px] border-[#dd6a36]" : "border border-[#e2e2e2]"}`}>
    <svg width="67" height="50" viewBox="1 1 67 50" className="block">{children}</svg>
  </div>
);
const ShowMe = () => (
  <div className={`absolute right-[4px] top-0 w-[255px] h-[682px] bg-[#fafafa] border-l border-r border-b border-t border-[#d4d4d4] shadow-[1px_2px_3px_rgba(0,0,0,0.3)] pl-[16px] pt-[17px] ${FONT}`}>
    <div className="grid grid-cols-[69px_69px_69px] gap-x-[6px] gap-y-[5px]">
      {thumbs.map((t, i) => <Thumb key={i} selected={i === 6}>{t}</Thumb>)}
    </div>
    <div className="ml-[2px] mt-[21px] text-[14.800px] leading-[20px] text-[#333]">For <b className="text-[13.800px] text-[#222]">horizontal bars</b> try</div>
    <div className="ml-[2px] mt-[8px] flex items-center h-[24px] text-[14.800px] text-[#333]"><span className="w-[71px] whitespace-nowrap">0 or more</span>
      <span className="w-[113px] h-[24px] rounded-full bg-[#4996b2] text-white flex items-center justify-center text-[15px]">Dimensions</span>
    </div>
    <div className="ml-[2px] mt-[10px] flex items-center h-[24px] text-[14.200px] text-[#333]"><span className="w-[68px] whitespace-nowrap">1 or more</span>
      <span className="w-[98px] h-[24px] rounded-full bg-[#00b180] text-white flex items-center justify-center text-[15px]">Measures</span>
    </div>
  </div>
);

const Shelf = ({ label, icon, className = "" }) => (
  <div className={`bg-[#fafafa] border-y border-l border-[#d4d4d4] flex items-center ${className}`}>
    <div className="w-[159px] h-full border-r border-[#d4d4d4] flex items-center pl-[8px] pt-[2px] gap-[8px] text-[14.500px] text-[#555]">
      {icon}{label}
    </div>
  </div>
);

const tabs = [
  ["Data Source", "w-[160px]", "db"], ["State", "w-[54px]"], ["Area", "w-[49px]"], ["season yield", "w-[103px]"], ["crop", "w-[47px]", "", true],
  ["growth", "w-[66px]"], ["plant", "w-[51px]"], ["season Prod", "w-[104px]"], ["season area", "w-[105px]"], ["cultivation area", "w-[127px]"],
  ["Dashboard 1", "w-[121px]", "d"], ["Dashboard 2", "w-[125px]", "d"], ["Dashboard 3", "w-[123px]", "d"], ["Story 1", "w-[84px]", "s"],
];
const TabIcon = ({ k }) => {
  if (k === "d") return <svg width="11" height="11" viewBox="0 0 11 11" fill="none" stroke="#666" className="mr-[4px]"><path d="M.500.500h10v10H.500zM5.500.500v10M.500 5.500h10" /></svg>;
  if (k === "s") return <svg width="11" height="12" viewBox="0 0 11 12" fill="none" stroke="#666" className="mr-[4px]"><path d="M1 1l4.500 1.500L10 1v8l-4.500 2L1 9zM5.500 2.500V11" /></svg>;
  if (k === "db") return <svg width="8" height="11" viewBox="0 0 8 11" fill="none" stroke="#666" className="mr-[5px]"><rect x=".500" y=".500" width="7" height="10" rx="2" /><path d="M.500 3h7" /></svg>;
  return null;
};
const Tabs = () => (
  <div className={`h-[37px] shrink-0 bg-[#e6e6e6] border-y border-[#d0d0d0] flex text-[#555] text-[14.500px] ${FONT}`}>
    {tabs.map(([n, w, k, active]) => (
      <div key={n} className={`${w} shrink-0 h-full border-r border-[#d0d0d0] pt-[1px] flex items-center whitespace-nowrap ${k === "db" ? "pl-[8px]" : "justify-center"} ${active ? "bg-white font-bold text-[#333]" : ""}`}>
        <TabIcon k={k} />{n}
      </div>
    ))}
    <div className="w-[31px] h-full border-r border-[#d0d0d0] flex items-center justify-center"><I w={16} h={16} sw={1}><path d="M1.500 1.500h10v10h-10zM4 9V6M6.500 9V3M9 9V5" /><path d="M12 9v6M9 12h6" stroke="#555" strokeWidth="1.800" /></I></div>
    <div className="w-[33px] h-full border-r border-[#d0d0d0] flex items-center justify-center"><I w={16} h={16} sw={1}><path d="M1.500 1.500h10v10h-10zM6.500 1.500v10M1.500 6.500h10" /><path d="M12 9v6M9 12h6" stroke="#555" strokeWidth="1.800" /></I></div>
    <div className="w-[32px] h-full border-r border-[#d0d0d0] flex items-center justify-center"><I w={16} h={16} sw={1}><path d="M1.500 1.500l4.500 1.500 4.500-1.500v9l-4.500 1.500-4.500-1.500zM6 3v9" /><path d="M12 9v6M9 12h6" stroke="#555" strokeWidth="1.800" /></I></div>
  </div>
);

const Status = () => (
  <div className={`h-[24px] shrink-0 bg-[#ebebeb] flex items-center text-[#444] ${FONT}`}>
    <span className="w-[75px] pt-[2px] text-[13px] whitespace-nowrap">57 marks</span>
    <span className="w-[126px] pt-[2px] text-[12.300px] whitespace-nowrap">1 row by 1 column</span>
    <span className="w-[1297px] pt-[2px] text-[13.700px] whitespace-nowrap">SUM(Area): 4,030,580,636</span>
    <div className="w-[157px] h-full border-l border-[#d0d0d0]" />
    <div className="w-[32px] h-full border-l border-[#d0d0d0]" />
    <div className="w-[32px] h-full border-l border-[#d0d0d0]" />
    <div className="w-[57px] h-full border-l border-[#d0d0d0]" />
    <div className="w-[71px] h-full border-l border-[#d0d0d0] flex items-center justify-center gap-[8px]">
      {["M2 1v8M9 1v8L3 5z", "M8 1v8L2 5z", "M2 1v8l6-4z", "M2 1v8l6-4zM9 1v8"].map((d, i) => <svg key={i} width="10" height="10" viewBox="0 0 10 10" fill="#bbb" stroke="#bbb" strokeWidth=".8"><path d={d} /></svg>)}
    </div>
    <div className="flex-1 h-full border-l border-[#d0d0d0] flex items-center pl-[8px] gap-[10px]">
      <svg width="12" height="12" viewBox="0 0 12 12" fill="#b5b5b5"><path d="M0 0h3v3H0zM4.500 0h3v3h-3zM9 0h3v3H9zM0 4.500h3v3H0zM4.500 4.500h3v3h-3zM9 4.500h3v3H9zM0 9h3v3H0zM4.500 9h3v3h-3zM9 9h3v3H9z" /></svg>
      <svg width="12" height="12" viewBox="0 0 12 12" fill="#b5b5b5"><path d="M0 0h12v8H0zM0 9.500h3V12H0zM4.500 9.500h3V12h-3zM9 9.500h3V12H9z" /></svg>
      <svg width="12" height="12" viewBox="0 0 12 12" fill="#666"><path d="M0 0h12v12H0z" /></svg>
    </div>
  </div>
);

export default function App() {
  return (
    <div className={`w-[1917px] h-[1012px] flex flex-col overflow-hidden bg-[#f5f5f5] ${FONT}`}>
      <div className="h-[23px] bg-[#f8f0ea] flex items-center shrink-0 text-[14.500px] text-[#222] font-['Liberation_Sans',sans-serif]">
        <div className="w-[18px] h-[18px] flex items-center justify-center">
          <svg width="16" height="16" viewBox="0 0 16 16" stroke="#4e8fc7" strokeWidth="1.100" fill="none"><path d="M8 1v14M1 8h14M3 3l10 10M13 3L3 13" strokeDasharray="2 1" /></svg>
        </div>
        <span className="ml-[7px]">Tableau - Book1 [from LOCALHOST]</span>
        <div className="ml-auto flex items-center">
          <svg width="14" height="14" viewBox="0 0 14 14" fill="none" stroke="#222"><path d="M1 7h12" /></svg>
          <svg width="14" height="14" viewBox="0 0 14 14" fill="none" stroke="#222" strokeWidth="1.200" className="ml-[43px]"><rect x="1" y="3" width="9" height="10" rx="1.500" /><path d="M4 3V2a1 1 0 0 1 1-1h6a2 2 0 0 1 2 2v6a1 1 0 0 1-1 1h-2" /></svg>
          <svg width="14" height="14" viewBox="0 0 14 14" fill="none" stroke="#222" strokeWidth="1.100" className="ml-[46px] mr-[25px]"><path d="M1 1l12 12M13 1L1 13" /></svg>
        </div>
      </div>
      <div className="h-[25px] bg-white flex items-center shrink-0 pl-[5px] pt-[2px] gap-[16px] text-[14.800px] text-[#222] font-['Liberation_Sans',sans-serif]">
        {["File", "Data", "Worksheet", "Dashboard", "Story", "Analysis", "Map", "Format", "Server", "Window", "Help"].map(m => <span key={m}>{m}</span>)}
      </div>
      <Toolbar />
      <div className="h-[852px] shrink-0 flex relative">
        <LeftPane />
        <MiddlePane />
        <div className="flex-1 ml-[6px] flex flex-col pb-[7px] min-w-0">
          <Shelf label="Columns" className="h-[32px] shrink-0" icon={<svg width="11" height="10" viewBox="0 0 11 10" fill="none" stroke="#555" strokeWidth="1.500"><path d="M1.500 0v10M5.500 0v10M9.500 0v10" /></svg>} />
          <Shelf label="Rows" className="h-[32px] shrink-0 mt-[6px]" icon={<svg width="11" height="10" viewBox="0 0 11 10" fill="none" stroke="#555" strokeWidth="1.500"><path d="M0 1.500h11M0 5h11M0 8.500h11" /></svg>} />
          <div className="flex-1 mt-[7px] flex min-h-0">
            <View />
            <Legend />
          </div>
        </div>
        <ShowMe />
      </div>
      <Tabs />
      <Status />
    </div>
  );
}
